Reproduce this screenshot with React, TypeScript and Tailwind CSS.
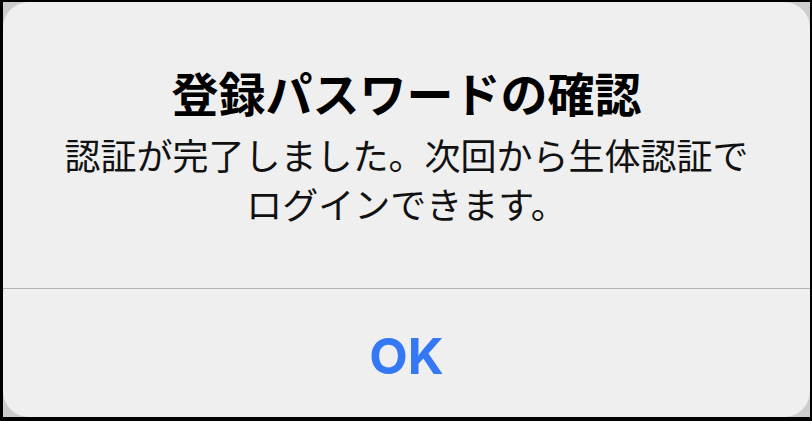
import React from 'react';

// 生体認証登録完了のアラート
export default function App() {
  const jp = { fontFamily: '"Noto Sans CJK JP", "Noto Sans", sans-serif' };

  return (
    <div className="w-[812px] h-[421px] bg-black pt-[2px] pl-[3px] pr-[2px] pb-[4px]">
      <div className="w-full h-full bg-[#cdcdcd]">
        <div className="w-full h-full rounded-[26px] bg-[#efefef] flex flex-col">
          {/* 本文 */}
          <div className="flex flex-col items-center pt-[62px] h-[286px]" style={jp}>
            <h1 className="text-[47px] leading-[56px] font-bold text-black">
              登録パスワードの確認
            </h1>
            <p className="mt-[10px] text-[36px] leading-[49px] text-[#111] text-center">
              認証が完了しました。次回から生体認証で
              <br />
              ログインできます。
            </p>
          </div>

          {/* 区切り線 */}
          <div className="h-px bg-[#b3b3b3]" />

          {/* ボタン */}
          <div className="flex-1 flex items-center justify-center pt-[6px]">
            <button
              className="text-[50px] leading-none font-bold text-[#3478f6]"
              style={{ fontFamily: 'Inter, Roboto, "Liberation Sans", sans-serif' }}
            >
              OK
            </button>
          </div>
        </div>
      </div>
    </div>
  );
}
